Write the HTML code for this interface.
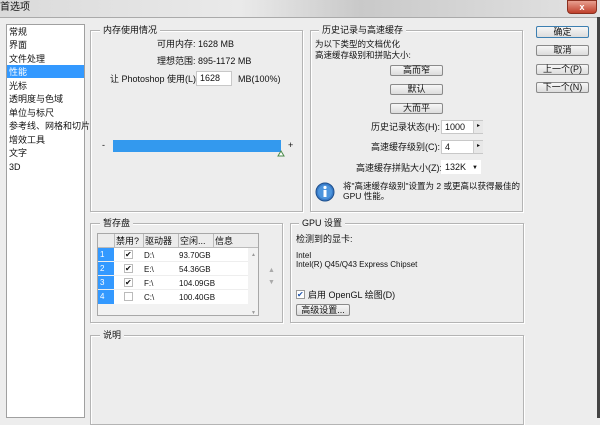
<!DOCTYPE html><html><head><meta charset="utf-8"><style>
*{margin:0;padding:0;box-sizing:border-box}
body{width:600px;height:418px;overflow:hidden;background:#ededed;font-family:"Liberation Sans","Noto Sans CJK SC",sans-serif;font-size:9px;color:#111;position:relative}
.a{position:absolute;white-space:nowrap;line-height:10px}
.g{position:absolute;border:1px solid #b4b4b4;box-shadow:inset 1px 1px 0 #fff,1px 1px 0 #fff}
.lg{position:absolute;background:#ededed;padding:0 3px;line-height:10px;white-space:nowrap}
.btn{position:absolute;border:1px solid #8a8a8a;border-radius:2px;background:linear-gradient(#f6f6f6,#dcdcdc);text-align:center;line-height:9px;font-size:9px;white-space:nowrap}
.in{position:absolute;background:#fff;border:1px solid #c8c8c8;line-height:12px;padding-left:3px;white-space:nowrap;overflow:hidden}
.li{position:absolute;left:9px;line-height:11px}
</style></head><body>
<div class="a" style="left:0;top:0;width:600px;height:18px;background:linear-gradient(90deg,#dadada,#eaeaea 40%,#c9c9c9 60%,#e3e3e3);"></div>
<div class="a" style="left:0;top:3px;font-size:10px">首选项</div>
<div class="a" style="left:567px;top:0;width:30px;height:14px;background:linear-gradient(#e8a090,#c0402c);border:1px solid #8a3020;border-radius:0 0 4px 4px;color:#fff;text-align:center;line-height:12px;font-weight:bold">x</div>
<div class="a" style="left:0;top:17px;width:600px;height:1px;background:#aaa"></div>
<div class="a" style="left:597px;top:17px;width:3px;height:401px;background:#444"></div>

<div class="a" style="left:6px;top:24px;width:79px;height:394px;background:#fff;border:1px solid #a0a0a0"></div>
<div class="a" style="left:7px;top:65px;width:77px;height:13px;background:#3399ff"></div>
<div class="li" style="top:27px">常规</div>
<div class="li" style="top:40px">界面</div>
<div class="li" style="top:54px">文件处理</div>
<div class="li" style="top:67px;color:#fff">性能</div>
<div class="li" style="top:81px">光标</div>
<div class="li" style="top:94px">透明度与色域</div>
<div class="li" style="top:108px">单位与标尺</div>
<div class="li" style="top:121px">参考线、网格和切片</div>
<div class="li" style="top:135px">增效工具</div>
<div class="li" style="top:148px">文字</div>
<div class="li" style="top:162px">3D</div>

<!-- memory -->
<div class="g" style="left:90px;top:30px;width:213px;height:182px"></div>
<div class="lg" style="left:100px;top:25px">内存使用情况</div>
<div class="a" style="left:157px;top:39px">可用内存: 1628 MB</div>
<div class="a" style="left:157px;top:56px">理想范围: 895-1172 MB</div>
<div class="a" style="left:110px;top:74px">让 Photoshop 使用(L):</div>
<div class="in" style="left:196px;top:71px;width:36px;height:15px">1628</div>
<div class="a" style="left:238px;top:74px">MB(100%)</div>
<div class="a" style="left:102px;top:140px">-</div>
<div class="a" style="left:113px;top:140px;width:168px;height:12px;background:#3399ee"></div>
<div class="a" style="left:288px;top:140px">+</div>
<svg class="a" style="left:277px;top:150px" width="8" height="7"><path d="M1 6L4 1L7 6Z" fill="#fff" stroke="#4a8a4a"/></svg>

<!-- history -->
<div class="g" style="left:310px;top:30px;width:213px;height:182px"></div>
<div class="lg" style="left:319px;top:25px">历史记录与高速缓存</div>
<div class="a" style="left:315px;top:39px;font-size:8.5px">为以下类型的文档优化</div>
<div class="a" style="left:315px;top:50px;font-size:8.5px">高速缓存级别和拼贴大小:</div>
<div class="btn" style="left:390px;top:65px;width:53px;height:11px">高而窄</div>
<div class="btn" style="left:390px;top:84px;width:53px;height:11px">默认</div>
<div class="btn" style="left:390px;top:103px;width:53px;height:11px">大而平</div>
<div class="a" style="left:371px;top:122px">历史记录状态(H):</div>
<div class="in" style="left:441px;top:120px;width:42px;height:14px">1000</div>
<div class="a" style="left:473px;top:121px;width:10px;height:12px;background:#e8e8e8;border-left:1px solid #ccc;font-size:6px;text-align:center">▸</div>
<div class="a" style="left:371px;top:142px">高速缓存级别(C):</div>
<div class="in" style="left:441px;top:140px;width:42px;height:14px">4</div>
<div class="a" style="left:473px;top:141px;width:10px;height:12px;background:#e8e8e8;border-left:1px solid #ccc;font-size:6px;text-align:center">▸</div>
<div class="a" style="left:356px;top:163px">高速缓存拼贴大小(Z):</div>
<div class="in" style="left:441px;top:160px;width:40px;height:14px;border-color:#fff">132K</div>
<div class="a" style="left:472px;top:163px;font-size:6px">▼</div>
<svg class="a" style="left:315px;top:182px" width="22" height="22"><circle cx="10" cy="10" r="9" fill="#3a7cc8" stroke="#1e4f8c"/><circle cx="10" cy="10" r="7" fill="#4d95dd"/><rect x="8.5" y="8" width="3" height="7" fill="#fff"/><circle cx="10" cy="5.5" r="1.6" fill="#fff"/></svg>
<div class="a" style="left:343px;top:181px;font-size:8.5px">将"高速缓存级别"设置为 2 或更高以获得最佳的</div>
<div class="a" style="left:343px;top:191px;font-size:8.5px">GPU 性能。</div>

<!-- buttons -->
<div class="btn" style="left:536px;top:26px;width:53px;height:12px;border-color:#3c7fb1;line-height:10px">确定</div>
<div class="btn" style="left:536px;top:45px;width:53px;height:11px">取消</div>
<div class="btn" style="left:536px;top:64px;width:53px;height:11px">上一个(P)</div>
<div class="btn" style="left:536px;top:82px;width:53px;height:11px">下一个(N)</div>

<!-- scratch -->
<div class="g" style="left:90px;top:223px;width:193px;height:100px"></div>
<div class="lg" style="left:100px;top:218px">暂存盘</div>
<div class="a" style="left:97px;top:233px;width:162px;height:83px;background:#f2f2f2;border:1px solid #a8a8a8"></div>
<div class="a" style="left:98px;top:234px;width:160px;height:14px;background:#ececec;border-bottom:1px solid #bbb"></div>
<div class="a" style="left:114px;top:234px;width:1px;height:14px;background:#bbb"></div>
<div class="a" style="left:143px;top:234px;width:1px;height:14px;background:#bbb"></div>
<div class="a" style="left:178px;top:234px;width:1px;height:14px;background:#bbb"></div>
<div class="a" style="left:213px;top:234px;width:1px;height:14px;background:#bbb"></div>
<div class="a" style="left:116px;top:236px">禁用?</div>
<div class="a" style="left:145px;top:236px">驱动器</div>
<div class="a" style="left:180px;top:236px">空闲...</div>
<div class="a" style="left:215px;top:236px">信息</div>
<div class="a" style="left:98px;top:248px;width:150px;height:56px;background:#fff"></div>
<div class="a" style="left:98px;top:248px;width:16px;height:56px;background:#3399ff"></div>
<div class="a" style="left:98px;top:261px;width:150px;height:1px;background:#eee"></div>
<div class="a" style="left:98px;top:275px;width:150px;height:1px;background:#eee"></div>
<div class="a" style="left:98px;top:289px;width:150px;height:1px;background:#eee"></div>
<div class="a" style="left:100px;top:250px;color:#fff;font-size:8px">1</div>
<div class="a" style="left:100px;top:264px;color:#fff;font-size:8px">2</div>
<div class="a" style="left:100px;top:278px;color:#fff;font-size:8px">3</div>
<div class="a" style="left:100px;top:292px;color:#fff;font-size:8px">4</div>
<div class="a" style="left:124px;top:250px;width:9px;height:9px;border:1px solid #bbb;font-size:8px;line-height:8px">✔</div>
<div class="a" style="left:124px;top:264px;width:9px;height:9px;border:1px solid #bbb;font-size:8px;line-height:8px">✔</div>
<div class="a" style="left:124px;top:278px;width:9px;height:9px;border:1px solid #bbb;font-size:8px;line-height:8px">✔</div>
<div class="a" style="left:124px;top:292px;width:9px;height:9px;border:1px solid #bbb"></div>
<div class="a" style="left:144px;top:251px;font-size:8px">D:\</div>
<div class="a" style="left:144px;top:265px;font-size:8px">E:\</div>
<div class="a" style="left:144px;top:279px;font-size:8px">F:\</div>
<div class="a" style="left:144px;top:293px;font-size:8px">C:\</div>
<div class="a" style="left:179px;top:251px;font-size:8px">93.70GB</div>
<div class="a" style="left:179px;top:265px;font-size:8px">54.36GB</div>
<div class="a" style="left:179px;top:279px;font-size:8px">104.09GB</div>
<div class="a" style="left:179px;top:293px;font-size:8px">100.40GB</div>
<div class="a" style="left:251px;top:250px;font-size:5px;color:#999">▲</div>
<div class="a" style="left:251px;top:308px;font-size:5px;color:#999">▼</div>
<div class="a" style="left:268px;top:266px;font-size:7px;color:#aaa">▲</div>
<div class="a" style="left:268px;top:278px;font-size:7px;color:#aaa">▼</div>

<!-- gpu -->
<div class="g" style="left:290px;top:223px;width:234px;height:100px"></div>
<div class="lg" style="left:299px;top:218px">GPU 设置</div>
<div class="a" style="left:296px;top:234px">检测到的显卡:</div>
<div class="a" style="left:296px;top:251px;font-size:8px">Intel</div>
<div class="a" style="left:296px;top:260px;font-size:8px">Intel(R) Q45/Q43 Express Chipset</div>
<div class="a" style="left:296px;top:290px;width:9px;height:9px;border:1px solid #999;background:#fff;font-size:8px;line-height:8px;color:#2255aa">✔</div>
<div class="a" style="left:308px;top:290px">启用 OpenGL 绘图(D)</div>
<div class="btn" style="left:296px;top:304px;width:54px;height:12px;line-height:10px">高级设置...</div>

<!-- desc -->
<div class="g" style="left:90px;top:335px;width:434px;height:90px"></div>
<div class="lg" style="left:100px;top:330px">说明</div>
</body></html>
